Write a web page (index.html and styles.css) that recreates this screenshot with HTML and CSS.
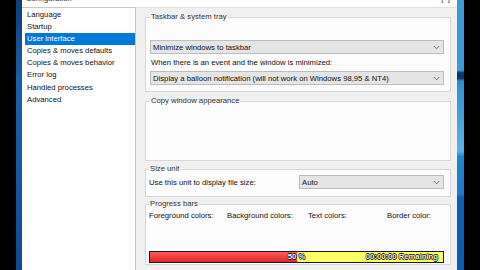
FILE: index.html
```html
<!DOCTYPE html>
<html>
<head>
<meta charset="utf-8">
<link rel="stylesheet" href="styles.css">
</head>
<body>
<div class="screen">
  <div class="desk desk-black"></div>
  <div class="desk desk-blue-l"></div>
  <div class="window">
    <div class="titlebar">
      <span class="title">Configuration</span>
      <span class="ctrl">[×]</span>
    </div>
    <div class="content">
      <ul class="nav">
        <li>Language</li>
        <li>Startup</li>
        <li class="active">User interface</li>
        <li>Copies &amp; moves defaults</li>
        <li>Copies &amp; moves behavior</li>
        <li>Error log</li>
        <li>Handled processes</li>
        <li>Advanced</li>
      </ul>
      <div class="pane">
        <fieldset class="group g-taskbar">
          <legend>Taskbar &amp; system tray</legend>
          <div class="select s-first"><span>Minimize windows to taskbar</span><svg class="chev" width="7" height="5" viewBox="0 0 7 5"><path d="M0.8 1 L3.5 3.8 L6.2 1" fill="none" stroke="#555" stroke-width="0.8"/></svg></div>
          <div class="label l-event">When there is an event and the window is minimized:</div>
          <div class="select s-second"><span>Display a balloon notification (will not work on Windows 98,95 &amp; NT4)</span><svg class="chev" width="7" height="5" viewBox="0 0 7 5"><path d="M0.8 1 L3.5 3.8 L6.2 1" fill="none" stroke="#555" stroke-width="0.8"/></svg></div>
        </fieldset>
        <fieldset class="group g-copy">
          <legend>Copy window appearance</legend>
        </fieldset>
        <fieldset class="group g-size">
          <legend>Size unit</legend>
          <div class="size-row">
            <span class="label">Use this unit to display file size:</span>
            <div class="select s-auto"><span>Auto</span><svg class="chev" width="7" height="5" viewBox="0 0 7 5"><path d="M0.8 1 L3.5 3.8 L6.2 1" fill="none" stroke="#555" stroke-width="0.8"/></svg></div>
          </div>
        </fieldset>
        <fieldset class="group g-progress">
          <legend>Progress bars</legend>
          <div class="color-row">
            <span>Foreground colors:</span>
            <span>Background colors:</span>
            <span>Text colors:</span>
            <span>Border color:</span>
          </div>
          <div class="bar">
            <div class="fill" style="width:50%"></div>
            <span class="bar-pct">50 %</span>
            <span class="bar-rem">00:00:00 Remaining</span>
          </div>
        </fieldset>
      </div>
    </div>
  </div>
  <div class="desk desk-blue-r"></div>
  <div class="desk desk-black-r"></div>
</div>
</body>
</html>
```
FILE: styles.css
```css
html, body {
  margin: 0;
  padding: 0;
  background: #000;
}
body {
  width: 480px;
  height: 270px;
  overflow: hidden;
  font-family: "Liberation Sans", Arial, sans-serif;
  font-size: 7.7px;
  color: #111;
}
.screen {
  display: flex;
  width: 480px;
  height: 270px;
}
.desk-black { width: 16px; background: #000; }
.desk-blue-l {
  width: 6px;
  background: linear-gradient(to bottom, #0c3f78 0%, #1a5fa8 30%, #165aa0 60%, #0e4a8c 100%);
}
.desk-blue-r {
  width: 7px;
  background: linear-gradient(to bottom, #3a9ad8 0%, #3a9ad8 26%, #0a3a6a 27%, #0a3a6a 29%, #2d8fd6 30%, #5ab4e6 56%, #1e88d0 58%, #1a7ccc 72%, #0c60b8 73%, #0c5cb4 100%);
}
.desk-black-r { width: 16px; background: #000; }

.window {
  width: 435px;
  display: flex;
  flex-direction: column;
  background: #fff;
}
.titlebar {
  height: 7px;
  overflow: hidden;
  display: flex;
  justify-content: space-between;
  padding: 0 7px 0 4px;
  color: #333;
}
.title, .ctrl {
  margin-top: -6px;
  line-height: 9px;
}
.content {
  flex: 1;
  display: flex;
  min-height: 0;
}
.nav {
  list-style: none;
  margin: 0;
  padding: 0.5px 0 0 3px;
  width: 110px;
  border-top: 1px solid #c9c9c9;
  border-right: 1px solid #c9c9c9;
  background: #fff;
}
.nav li {
  height: 12.2px;
  line-height: 12.2px;
  padding-left: 2px;
  white-space: nowrap;
  color: #111;
}
.nav li.active {
  background: #0078d7;
  color: #fff;
}
.pane {
  flex: 1;
  display: flex;
  flex-direction: column;
  padding: 4px 6px 0 9px;
  background: #f0f0f0;
  border-top: 1px solid #e0e0e0;
}
.group {
  margin: 0;
  padding: 0 6px 0 4px;
  border: 1px solid #d8d8d8;
  background: #fcfcfc;
  min-width: 0;
  box-sizing: border-box;
}
.group legend {
  padding: 0 1px;
  margin-left: 0;
  line-height: 10px;
  color: #333;
}
.g-taskbar { height: 80px; }
.g-copy { height: 65px; margin-top: 4px; }
.g-size { height: 33px; margin-top: 3px; padding-left: 3px; }
.g-progress { height: 66px; margin-top: 2px; padding-left: 3px; }

.select {
  height: 14px;
  box-sizing: border-box;
  border: 1px solid #bdbdbd;
  background: #e5e5e5;
  display: flex;
  align-items: center;
  justify-content: space-between;
  padding: 0 3px 0 2px;
  white-space: nowrap;
}
.s-first { margin-top: 18px; }
.l-event { margin-top: 4px; line-height: 10px; padding-left: 1px; }
.s-second { margin-top: 3px; }
.label { white-space: nowrap; }

.size-row {
  display: flex;
  align-items: center;
  margin-top: 1px;
}
.size-row .label { width: 150px; }
.s-auto { flex: 1; }

.color-row {
  display: grid;
  grid-template-columns: 78px 81px 79px 1fr;
  margin-top: 2px;
  line-height: 10px;
  white-space: nowrap;
}
.bar {
  margin-top: 30px;
  height: 12px;
  box-sizing: border-box;
  border: 1px solid #1a1a1a;
  background: #ffff66;
  display: grid;
  align-items: center;
}
.bar > * {
  grid-area: 1 / 1;
}
.fill {
  height: 100%;
  background: linear-gradient(to bottom, #ff5a5a 0%, #f03a3a 60%, #e02828 100%);
  justify-self: start;
}
.bar-pct, .bar-rem {
  font-weight: bold;
  line-height: 10px;
  color: #fff;
  text-shadow: 0.6px 0 0 #000, -0.6px 0 0 #000, 0 0.6px 0 #000, 0 -0.6px 0 #000;
  white-space: nowrap;
}
.bar-pct { justify-self: center; }
.bar-rem { justify-self: end; padding-right: 5px; color: #ffffcc; }
```
